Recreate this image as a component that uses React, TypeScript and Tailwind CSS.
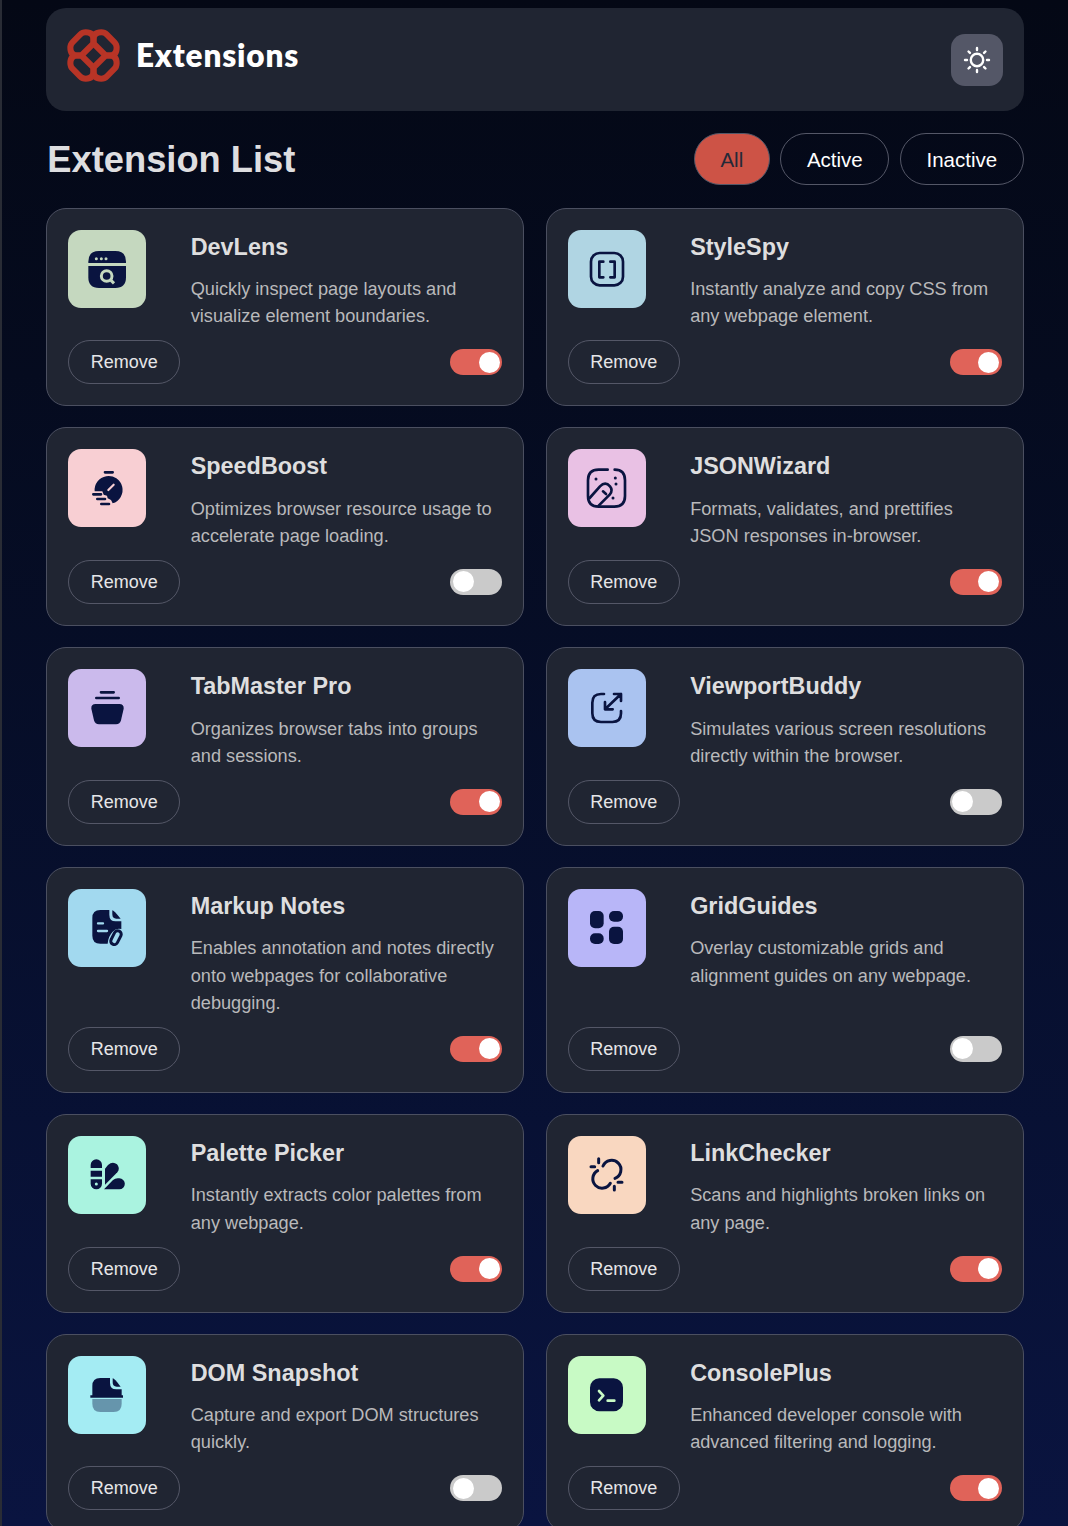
import { useState, type ReactNode } from 'react';

const NAVY = '#0a1440';

const line = {
  fill: 'none',
  stroke: NAVY,
  strokeWidth: 8,
  strokeLinecap: 'round' as const,
  strokeLinejoin: 'round' as const,
};

type Extension = {
  name: string;
  description: string;
  active: boolean;
  tile: string;
  icon: ReactNode;
};

const initialExtensions: Extension[] = [
  {
    name: 'DevLens',
    description: 'Quickly inspect page layouts and visualize element boundaries.',
    active: true,
    tile: '#c5d8bf',
    icon: (
      <>
        <path fill={NAVY} d="M61 99V95Q61 63 93 63H142Q174 63 174 95V99Z" />
        <path fill={NAVY} d="M61 108H174V142Q174 174 142 174H93Q61 174 61 142Z" />
        <g fill="#c5d8bf">
          <circle cx="85" cy="86" r="4.5" />
          <circle cx="100" cy="86" r="4.5" />
          <circle cx="114" cy="86" r="4.5" />
        </g>
        <g fill="none" stroke="#c5d8bf" strokeWidth="9">
          <circle cx="116" cy="138" r="16" />
          <path d="M126 148L138 160" />
        </g>
      </>
    ),
  },
  {
    name: 'StyleSpy',
    description: 'Instantly analyze and copy CSS from any webpage element.',
    active: true,
    tile: '#b0d5e3',
    icon: (
      <g {...line}>
        <rect x="69" y="69" width="96" height="97" rx="26" />
        <path d="M106 95H94V142H106M127 95H140V142H127" />
      </g>
    ),
  },
  {
    name: 'SpeedBoost',
    description: 'Optimizes browser resource usage to accelerate page loading.',
    active: false,
    tile: '#f8cfd3',
    icon: (
      <>
        <path fill={NAVY} d="M80 127A42 42 0 1 1 134 163L129 153L119 148L117 140L107 137L103 127Z" />
        <path d="M121 123L137 107" stroke="#f8cfd3" strokeWidth="6.5" strokeLinecap="round" />
        <path {...line} d="M111 70H134M76 136H99M88 150H111M100 165H123" />
      </>
    ),
  },
  {
    name: 'JSONWizard',
    description: 'Formats, validates, and prettifies JSON responses in-browser.',
    active: true,
    tile: '#e9c1e4',
    icon: (
      <>
        <path {...line} d="M119 62H92Q60 62 60 94V141Q60 173 92 173H139Q171 173 171 141V94Q171 62 140 62" />
        <path {...line} d="M65 147L96 112Q112 96 126 112Q136 124 125 137L92 170M105 127L114 135" />
        <g fill={NAVY}>
          <circle cx="84" cy="90" r="4.5" />
          <circle cx="142" cy="87" r="4.5" />
          <circle cx="144" cy="105" r="4.5" />
          <circle cx="135" cy="147" r="4.5" />
        </g>
      </>
    ),
  },
  {
    name: 'TabMaster Pro',
    description: 'Organizes browser tabs into groups and sessions.',
    active: true,
    tile: '#cbbaec',
    icon: (
      <>
        <path {...line} d="M99 70H137M85 87H152" />
        <path fill={NAVY} d="M83 105H154Q168 105 167 119L159 154Q156 166 144 166H93Q81 166 78 154L70 119Q69 105 83 105Z" />
      </>
    ),
  },
  {
    name: 'ViewportBuddy',
    description: 'Simulates various screen resolutions directly within the browser.',
    active: false,
    tile: '#aac3f0',
    icon: (
      <g {...line}>
        <path d="M108 75H99Q73 75 73 101V133Q73 159 99 159H133Q159 159 159 133V126" />
        <path d="M159 75L111 121M138 75H159V96M111 99V121H134" />
      </g>
    ),
  },
  {
    name: 'Markup Notes',
    description: 'Enables annotation and notes directly onto webpages for collaborative debugging.',
    active: true,
    tile: '#a2d9ef',
    icon: (
      <>
        <path fill={NAVY} d="M97 63H124V77Q124 97 143 97H160V120Q145 116 134 128Q120 143 119 164H97Q73 164 73 140V87Q73 63 97 63Z" />
        <path fill={NAVY} d="M133 64Q137 64 158 89H145Q133 89 133 76Z" />
        <path d="M90 103H105M90 126H117" stroke="#a2d9ef" strokeWidth="7" strokeLinecap="round" />
        <rect x="133.5" y="124" width="21" height="44" rx="10.5" {...line} strokeWidth={9} transform="rotate(27 144 146)" />
      </>
    ),
  },
  {
    name: 'GridGuides',
    description: 'Overlay customizable grids and alignment guides on any webpage.',
    active: false,
    tile: '#b8b6f8',
    icon: (
      <g fill={NAVY}>
        <rect x="66" y="66" width="41" height="52" rx="15" />
        <rect x="123" y="66" width="42" height="32" rx="15" />
        <rect x="66" y="133" width="41" height="32" rx="15" />
        <rect x="123" y="113" width="42" height="52" rx="15" />
      </g>
    ),
  },
  {
    name: 'Palette Picker',
    description: 'Instantly extracts color palettes from any webpage.',
    active: true,
    tile: '#aaf3e0',
    icon: (
      <>
        <g fill={NAVY}>
          <path d="M68 96V87A17 17 0 0 1 102 87V96ZM68 104H102V122H68ZM68 130H102V143A17 17 0 0 1 68 143Z" />
          <path d="M111 98L120 87Q134 74 147 85Q158 98 148 109L111 146Z" />
          <path d="M108 160H154A16 16 0 0 0 154 127Q143 125 135 132Z" />
        </g>
        <circle cx="85" cy="144" r="4.5" fill="#aaf3e0" />
      </>
    ),
  },
  {
    name: 'LinkChecker',
    description: 'Scans and highlights broken links on any page.',
    active: true,
    tile: '#f9d7c0',
    icon: (
      <g {...line} strokeWidth={9}>
        <path d="M105 90A28 28 0 1 1 141 127M89 104A28 28 0 1 0 127 142" />
        <path d="M92 68V80M69 92H80M150 139H162M139 151V162" />
      </g>
    ),
  },
  {
    name: 'DOM Snapshot',
    description: 'Capture and export DOM structures quickly.',
    active: false,
    tile: '#a4ecf3',
    icon: (
      <>
        <path fill={NAVY} d="M97 66H126V80Q126 100 145 100H161V118H165V125H67V118H73V90Q73 66 97 66Z" />
        <path fill={NAVY} d="M134 67Q139 67 158 92H146Q134 92 134 79Z" />
        <path fill={NAVY} opacity="0.4" d="M73 129H161V143Q161 168 137 168H97Q73 168 73 143Z" />
      </>
    ),
  },
  {
    name: 'ConsolePlus',
    description: 'Enhanced developer console with advanced filtering and logging.',
    active: true,
    tile: '#c8fac5',
    icon: (
      <>
        <rect x="66" y="67" width="99" height="99" rx="28" fill={NAVY} />
        <path {...line} stroke="#c8fac5" d="M93 105L106 119L93 133M119 134H139" />
      </>
    ),
  },
];

function LogoMark() {
  return (
    <svg className="size-[53px]" viewBox="-79 -79 158 158" fill="none" stroke="#b83426" strokeWidth="18" aria-hidden="true">
      {[0, 90, 180, 270].map((angle) => (
        <path
          key={angle}
          transform={`rotate(${angle})`}
          d="M0 -36V-48Q0 -69 -23 -69Q-33 -69 -40 -62L-62 -40Q-69 -33 -69 -23Q-69 0 -48 0H-36Z"
        />
      ))}
    </svg>
  );
}

function SunIcon() {
  return (
    <svg className="size-[28px]" viewBox="-14 -14 28 28" fill="none" stroke="white" strokeWidth="2.4" strokeLinecap="round" aria-hidden="true">
      <circle r="6.2" />
      {[0, 45, 90, 135, 180, 225, 270, 315].map((angle) => (
        <path key={angle} transform={`rotate(${angle})`} d="M0 -12V-10" />
      ))}
    </svg>
  );
}

function Header() {
  return (
    <header className="flex h-[103px] items-start justify-between rounded-[20px] bg-[#202532] px-[20.6px] pt-5">
      <div className="flex items-center gap-4 pt-px">
        <LogoMark />
        <span className="pt-px font-['Lato'] text-[31.5px] leading-none font-extrabold tracking-[0.85px] text-white">Extensions</span>
      </div>
      <button aria-label="Toggle theme" className="mt-[6px] flex size-[52px] items-center justify-center rounded-[14px] bg-[#545767]">
        <SunIcon />
      </button>
    </header>
  );
}

function Toggle({ on, label, onChange }: { on: boolean; label: string; onChange: () => void }) {
  return (
    <button
      role="switch"
      aria-checked={on}
      aria-label={label}
      onClick={onChange}
      className={`flex h-[26px] w-[52px] items-center rounded-full px-[2.6px] ${on ? 'justify-end bg-[#e06359]' : 'justify-start bg-[#cacaca]'}`}
    >
      <span className="size-[21px] rounded-full bg-white" />
    </button>
  );
}

function ExtensionCard({ item, onToggle, onRemove }: { item: Extension; onToggle: () => void; onRemove: () => void }) {
  return (
    <article className="flex flex-col justify-between rounded-[20px] border border-[#4b4f60] bg-[#202532] p-[21px]">
      <div className="flex gap-[44.4px]">
        <svg className="size-[78px] shrink-0 rounded-[13px]" viewBox="0 0 234 234" style={{ backgroundColor: item.tile }} aria-hidden="true">
          {item.icon}
        </svg>
        <div className="min-w-0">
          <h2 className="text-[23.4px] leading-[35px] font-bold text-[#dededf]">{item.name}</h2>
          <p className="mt-[11.4px] w-[311px] text-[18.18px] leading-[27.3px] text-[#b9b9bb]">{item.description}</p>
        </div>
      </div>
      <div className="mt-[9.6px] flex items-center justify-between">
        <button onClick={onRemove} className="h-[44px] w-[112px] rounded-full border border-[#545767] pt-px text-[18px] text-[#e6e6e8]">
          Remove
        </button>
        <Toggle on={item.active} label={item.name} onChange={onToggle} />
      </div>
    </article>
  );
}

const filters = [
  { name: 'All', width: 'w-[76px]' },
  { name: 'Active', width: 'w-[109px]' },
  { name: 'Inactive', width: 'w-[124px]' },
];

export default function App() {
  const [items, setItems] = useState(initialExtensions);
  const [filter, setFilter] = useState('All');
  const visible = items.filter((item) => filter === 'All' || item.active === (filter === 'Active'));

  return (
    <div className="h-[1526px] overflow-hidden border-l-2 border-[#292c35] bg-linear-to-b from-[#040815] to-[#0a1440] pt-2 pr-[44.2px] pl-[44.3px] font-['Liberation_Sans',Arial,sans-serif]">
      <Header />
      <div className="mt-[22px] flex h-[52px] items-center justify-between">
        <h1 className="pt-[2px] pl-px text-[36.3px] leading-none font-bold text-[#dedee0]">Extension List</h1>
        <div className="flex gap-[10.5px]">
          {filters.map(({ name, width }) => (
            <button
              key={name}
              onClick={() => setFilter(name)}
              className={`h-[52px] rounded-[26px] border border-[#545767] pt-[2px] text-[20.5px] ${width} ${
                filter === name ? 'bg-[#cd5346] text-[#242938]' : 'text-white'
              }`}
            >
              {name}
            </button>
          ))}
        </div>
      </div>
      <main className="mt-[22.6px] grid grid-cols-2 gap-x-[21.4px] gap-y-[21.2px]">
        {visible.map((item) => (
          <ExtensionCard
            key={item.name}
            item={item}
            onToggle={() => setItems(items.map((other) => (other === item ? { ...other, active: !other.active } : other)))}
            onRemove={() => setItems(items.filter((other) => other !== item))}
          />
        ))}
      </main>
    </div>
  );
}
